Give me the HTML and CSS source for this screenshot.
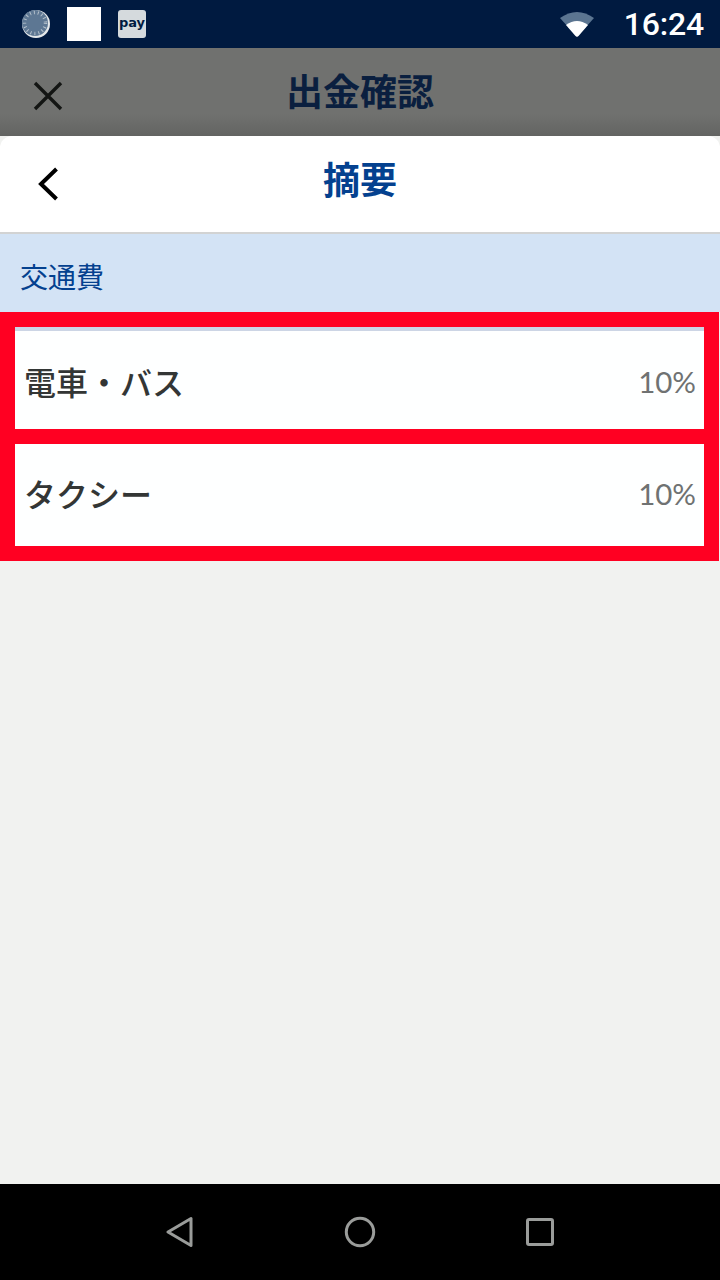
FILE: index.html
```html
<!DOCTYPE html>
<html lang="ja">
<head>
    <meta charset="UTF-8">
    <meta name="viewport" content="width=device-width, initial-scale=1.0">
    <title>摘要</title>
    <link rel="stylesheet" href="styles.css">
</head>
<body>
    <div class="phone">

        <!-- Status bar -->
        <div class="status-bar">
            <svg class="status-clock" width="28" height="28" viewBox="0 0 28 28">
                <circle cx="14" cy="14" r="14" fill="#e4e8ea"/>
                <circle cx="13" cy="13" r="13" fill="#5d7793"/>
                <circle cx="13" cy="13" r="10.500" fill="none" stroke="#b4c0cb" stroke-width="3.500" stroke-dasharray="1 3"/>
            </svg>
            <div class="status-square"></div>
            <div class="status-pay">pay</div>
            <div class="status-right">
                <svg class="status-wifi" width="36" height="28" viewBox="0 0 36 28">
                    <path d="M1 9 Q18 -3 35 9 L18 28 Z" fill="#5b7591"/>
                    <path d="M7 16 Q18 8 29 16 L19.500 27 Q18 28.500 16.500 27 Z" fill="#fff"/>
                </svg>
                <span class="status-time">16:24</span>
            </div>
        </div>

        <!-- Dimmed page behind the sheet -->
        <div class="back-header">
            <svg class="back-close" width="30" height="30" viewBox="0 0 30 30">
                <path d="M2 2 L28 28 M28 2 L2 28" stroke="#131513" stroke-width="3.400" fill="none"/>
            </svg>
            <h2>出金確認</h2>
        </div>

        <!-- Sheet -->
        <div class="sheet">
            <div class="sheet-header">
                <svg class="sheet-back" width="20" height="34" viewBox="0 0 20 34">
                    <path d="M18.500 2 L3 17 L18.500 32" stroke="#000" stroke-width="4" fill="none"/>
                </svg>
                <h1>摘要</h1>
            </div>
            <div class="section-label">交通費</div>
            <ul class="rate-list">
                <li class="rate-row first">
                    <span class="rate-name">電車・バス</span>
                    <span class="rate-value">10%</span>
                </li>
                <li class="rate-row second">
                    <span class="rate-name">タクシー</span>
                    <span class="rate-value">10%</span>
                </li>
            </ul>
        </div>

        <!-- Navigation bar -->
        <div class="nav-bar">
            <svg width="28" height="32" viewBox="0 0 28 32">
                <path d="M2 16 L25 2.500 V29.500 Z" fill="none" stroke="#9a9c9a" stroke-width="3" stroke-linejoin="round"/>
            </svg>
            <svg width="32" height="32" viewBox="0 0 32 32">
                <circle cx="16" cy="16" r="13.700" fill="none" stroke="#9a9c9a" stroke-width="3"/>
            </svg>
            <svg width="28" height="28" viewBox="0 0 28 28">
                <rect x="1.500" y="1.500" width="25" height="25" rx="1.500" fill="none" stroke="#9a9c9a" stroke-width="3"/>
            </svg>
        </div>

    </div>
</body>
</html>
```

FILE: styles.css
```css
* {
    box-sizing: border-box;
}
body {
    margin: 0;
    padding: 0;
    font-family: "Noto Sans CJK JP", "Noto Sans", sans-serif;
    background-color: #f1f2f0;
}
.phone {
    width: 720px;
    height: 1280px;
    display: flex;
    flex-direction: column;
    overflow: hidden;
}
.status-bar {
    height: 48px;
    flex-shrink: 0;
    display: flex;
    align-items: center;
    padding: 0 16px 0 22px;
    background-color: #001a40;
}
.status-square {
    width: 34px;
    height: 34px;
    margin-left: 17px;
    background-color: #fff;
}
.status-pay {
    width: 28px;
    height: 28px;
    margin-left: 17px;
    border-radius: 3px;
    background-color: #d5dadd;
    color: #001a40;
    font-family: "DejaVu Sans", sans-serif;
    font-size: 13px;
    font-weight: 700;
    line-height: 25px;
    text-align: center;
}
.status-right {
    margin-left: auto;
    display: flex;
    align-items: center;
}
.status-wifi {
    margin-right: 29px;
    margin-top: -3px;
}
.status-time {
    color: #fff;
    font-family: Roboto, sans-serif;
    font-size: 32px;
    font-weight: 500;
    letter-spacing: -0.2px;
}
.back-header {
    height: 88px;
    flex-shrink: 0;
    display: flex;
    align-items: center;
    justify-content: center;
    position: relative;
    background: linear-gradient(#70716f 75%, #636462);
}
.back-header h2 {
    margin: 0 0 4px;
    color: #0a1f3f;
    font-size: 37px;
    font-weight: 700;
}
.back-close {
    position: absolute;
    left: 33px;
    top: 33px;
}
.sheet {
    flex: 1;
    display: flex;
    flex-direction: column;
    background-color: #f1f2f0;
    border-radius: 12px 12px 0 0;
    overflow: hidden;
}
.sheet-header {
    height: 98px;
    flex-shrink: 0;
    display: flex;
    align-items: center;
    justify-content: center;
    position: relative;
    background-color: #fff;
    border-bottom: 2px solid #d2d3d3;
}
.sheet-header h1 {
    margin: 0 0 12px;
    color: #04418f;
    font-size: 37px;
    font-weight: 700;
}
.sheet-back {
    position: absolute;
    left: 38px;
    top: 31px;
}
.section-label {
    height: 78px;
    flex-shrink: 0;
    padding: 6px 20px 0;
    display: flex;
    align-items: center;
    background-color: #d3e3f5;
    color: #04418f;
    font-size: 28px;
}
.rate-list {
    list-style: none;
    margin: 0 1px 0 0;
    padding: 15px;
    display: flex;
    flex-direction: column;
    gap: 15px;
    background-color: #ff0022;
}
.rate-row {
    height: 102px;
    display: flex;
    align-items: center;
    justify-content: space-between;
    padding: 0 8px 0 9px;
    background-color: #feffff;
}
.rate-row.first {
    border-top: 4px solid #ccd5e5;
    padding-top: 2px;
}
.rate-row.second {
    padding-bottom: 4px;
}
.rate-name {
    color: #333635;
    font-size: 32px;
    font-weight: 500;
}
.rate-value {
    color: #6f7272;
    font-family: Lato, sans-serif;
    font-size: 29.500px;
}
.nav-bar {
    height: 96px;
    flex-shrink: 0;
    display: flex;
    align-items: center;
    justify-content: center;
    gap: 150px;
    background-color: #000;
}
```
